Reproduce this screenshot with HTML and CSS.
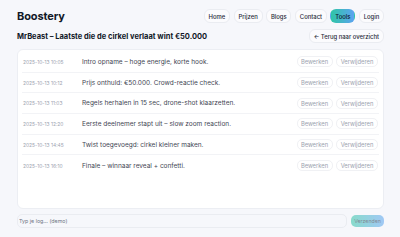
FILE: index.html
```html
<!DOCTYPE html>
<html lang="nl">
<head>
<meta charset="utf-8">
<title>Boostery</title>
<link rel="stylesheet" href="styles.css">
</head>
<body>
<div class="page">
  <header class="topbar">
    <div class="brand">Boostery</div>
    <nav class="nav">
      <a class="pill">Home</a>
      <a class="pill">Prijzen</a>
      <a class="pill">Blogs</a>
      <a class="pill">Contact</a>
      <a class="pill active">Tools</a>
      <a class="pill">Login</a>
    </nav>
  </header>
  <div class="titlebar">
    <h1 class="title">MrBeast – Laatste die de cirkel verlaat wint €50.000</h1>
    <a class="pill back">← Terug naar overzicht</a>
  </div>
  <main class="card">
    <div class="row"><span class="date">2025-10-13 10:05</span><span class="text">Intro opname – hoge energie, korte hook.</span><span class="actions"><button class="btn">Bewerken</button><button class="btn">Verwijderen</button></span></div>
    <div class="row"><span class="date">2025-10-13 10:12</span><span class="text">Prijs onthuld: €50.000. Crowd-reactie check.</span><span class="actions"><button class="btn">Bewerken</button><button class="btn">Verwijderen</button></span></div>
    <div class="row"><span class="date">2025-10-13 11:03</span><span class="text">Regels herhalen in 15 sec, drone-shot klaarzetten.</span><span class="actions"><button class="btn">Bewerken</button><button class="btn">Verwijderen</button></span></div>
    <div class="row"><span class="date">2025-10-13 12:20</span><span class="text">Eerste deelnemer stapt uit – slow zoom reaction.</span><span class="actions"><button class="btn">Bewerken</button><button class="btn">Verwijderen</button></span></div>
    <div class="row"><span class="date">2025-10-13 14:45</span><span class="text">Twist toegevoegd: cirkel kleiner maken.</span><span class="actions"><button class="btn">Bewerken</button><button class="btn">Verwijderen</button></span></div>
    <div class="row"><span class="date">2025-10-13 16:10</span><span class="text">Finale – winnaar reveal + confetti.</span><span class="actions"><button class="btn">Bewerken</button><button class="btn">Verwijderen</button></span></div>
  </main>
  <footer class="composer">
    <input class="input" type="text" placeholder="Typ je log… (demo)">
    <button class="send">Verzenden</button>
  </footer>
</div>
</body>
</html>
```

FILE: styles.css
```css
* { box-sizing: border-box; }
html, body { margin: 0; padding: 0; }
body {
  background: #f6f7fb;
  font-family: Inter, "Noto Sans", sans-serif;
  color: #111827;
  width: 400px;
  height: 237px;
  overflow: hidden;
}
.page {
  padding: 9px 16px 0 17px;
  display: flex;
  flex-direction: column;
}
.topbar {
  display: flex;
  justify-content: space-between;
  align-items: center;
  height: 14px;
}
.brand {
  font-size: 11px;
  font-weight: 700;
  letter-spacing: -0.1px;
  color: #111827;
}
.nav {
  display: flex;
  gap: 3.6px;
}
.pill {
  display: inline-flex;
  align-items: center;
  justify-content: center;
  height: 14px;
  padding: 0 3.8px;
  border: 1px solid #eaecf1;
  border-radius: 6px;
  background: #fbfbfd;
  font-size: 5.9px;
  font-weight: 500;
  color: #1f2937;
  text-decoration: none;
}
.pill.active {
  background: linear-gradient(90deg, #2fc5a6, #5ba3f0);
  border-color: transparent;
  color: #0f172a;
}
.titlebar {
  display: flex;
  justify-content: space-between;
  align-items: center;
  margin-top: 6px;
  height: 14px;
}
.title {
  margin: 0;
  font-size: 7.5px;
  font-weight: 700;
  color: #111827;
}
.back {
  padding: 0 4px;
  font-size: 5.9px;
}
.card {
  margin-top: 6px;
  height: 160px;
  background: #ffffff;
  border: 1px solid #eceef3;
  border-radius: 6px;
  padding: 2px 4px 0 4px;
}
.row {
  display: flex;
  align-items: center;
  height: 20.7px;
  border-bottom: 1px solid #f2f3f6;
  padding: 0 1px;
}
.row:last-child { border-bottom: none; }
.date {
  width: 59px;
  flex: none;
  font-size: 4.9px;
  color: #9ca3af;
}
.text {
  flex: 1;
  font-size: 6.5px;
  color: #3f4653;
}
.actions {
  display: flex;
  gap: 3.5px;
}
.btn {
  font-family: inherit;
  height: 11px;
  padding: 0;
  background: #ffffff;
  border: 1px solid #f0f1f4;
  border-radius: 5px;
  font-size: 5.8px;
  color: #9ca3af;
  margin: 0;
}
.btn:first-child { width: 36px; }
.btn:last-child { width: 42px; }
.composer {
  display: flex;
  align-items: center;
  gap: 4px;
  margin-top: 5px;
}
.input {
  flex: 1;
  height: 14px;
  border: 1px solid #eaecf1;
  border-radius: 5px;
  background: #f6f7fb;
  font-family: inherit;
  font-size: 5.3px;
  padding: 0 1px;
  color: #374151;
  outline: none;
}
.input::placeholder { color: #6b7280; }
.send {
  font-family: inherit;
  height: 12px;
  width: 33px;
  padding: 0;
  border: none;
  border-radius: 5px;
  background: linear-gradient(90deg, #2fc5a6, #5ba3f0);
  opacity: 0.55;
  font-size: 5.2px;
  color: #1f2937;
}
```
